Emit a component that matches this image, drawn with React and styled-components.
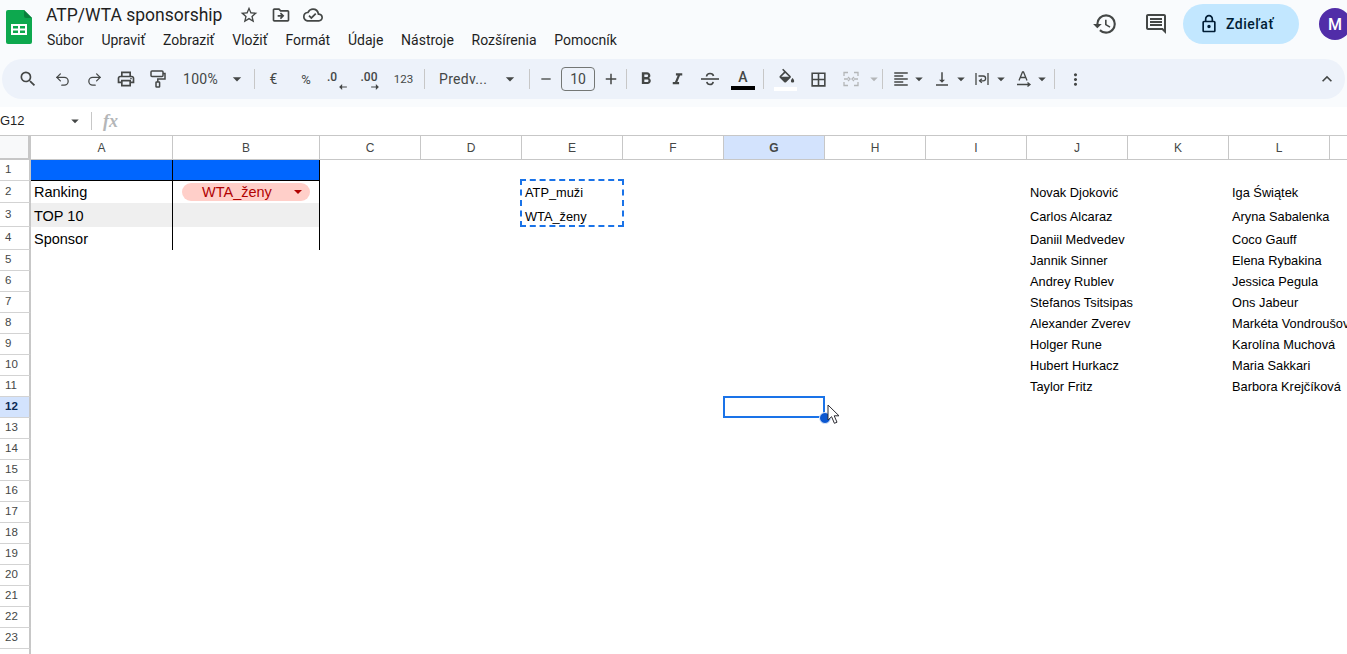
import React from "react";
import styled, { createGlobalStyle } from "styled-components";
import {
  MdSearch,
  MdOutlinePrint,
  MdStarBorder,
  MdOutlineDriveFileMove,
  MdOutlineCloudDone,
  MdHistory,
  MdOutlineComment,
  MdOutlineLock,
  MdArrowDropDown,
  MdRemove,
  MdAdd,
  MdFormatBold,
  MdFormatItalic,
  MdBorderAll,
  MdFormatAlignLeft,
  MdVerticalAlignBottom,
  MdMoreVert,
  MdExpandLess,
} from "react-icons/md";
import { Undo2, Redo2 } from "lucide-react";

const COLUMNS = ["A", "B", "C", "D", "E", "F", "G", "H", "I", "J", "K", "L", "M"];
const ROW_COUNT = 24;
const MENU = ["Súbor", "Upraviť", "Zobraziť", "Vložiť", "Formát", "Údaje", "Nástroje", "Rozšírenia", "Pomocník"];

const ATP = [
  "Novak Djoković",
  "Carlos Alcaraz",
  "Daniil Medvedev",
  "Jannik Sinner",
  "Andrey Rublev",
  "Stefanos Tsitsipas",
  "Alexander Zverev",
  "Holger Rune",
  "Hubert Hurkacz",
  "Taylor Fritz",
];
const WTA = [
  "Iga Świątek",
  "Aryna Sabalenka",
  "Coco Gauff",
  "Elena Rybakina",
  "Jessica Pegula",
  "Ons Jabeur",
  "Markéta Vondroušová",
  "Karolína Muchová",
  "Maria Sakkari",
  "Barbora Krejčíková",
];

function rowHeight(n) {
  return { 1: 21, 2: 22, 3: 24, 4: 23 }[n] || 21;
}

function SheetsLogo() {
  return (
    <svg width="26" height="34" viewBox="0 0 26 34">
      <path d="M2 0h16l8 8v24a2 2 0 0 1-2 2H2a2 2 0 0 1-2-2V2a2 2 0 0 1 2-2z" fill="#0da84e" />
      <path d="M18 0l8 8h-6a2 2 0 0 1-2-2z" fill="#0a7f3c" />
      <path d="M5 14h16v11H5z" fill="#fff" />
      <path d="M7 16h5v2.500H7zM14 16h5v2.500h-5zM7 20.500h5V23H7zM14 20.500h5V23h-5z" fill="#0da84e" />
    </svg>
  );
}

function PaintIcon() {
  return (
    <svg width="16" height="18" viewBox="0 0 16 18" fill="none" stroke="#444746" strokeWidth="1.5">
      <rect x="1" y="1" width="12" height="5.500" rx="1" />
      <path d="M13 3.500h2V9H7.800v3" />
      <rect x="6" y="12" width="3.600" height="5" rx="0.600" />
    </svg>
  );
}

function StrikeIcon() {
  return (
    <svg width="18" height="16" viewBox="0 0 18 16" fill="none" stroke="#444746" strokeWidth="1.6">
      <path d="M0 8h18" />
      <path d="M5.500 5.500C5.800 3.300 7.200 2.500 9 2.500s3.200.8 3.500 2.500" />
      <path d="M5.800 10.800c.4 1.800 1.600 2.700 3.200 2.700s2.900-.9 3.200-2.700" />
    </svg>
  );
}

function FillIcon() {
  return (
    <svg width="18" height="18" viewBox="0 0 22 18" fill="#444746">
      <path d="M16.560 8.940L7.620 0 6.210 1.410l2.380 2.380-5.150 5.150c-.59.590-.59 1.540 0 2.120l5.500 5.500c.29.290.68.440 1.060.440s.77-.15 1.060-.44l5.500-5.500c.59-.58.59-1.530 0-2.120zM5.210 10L10 5.210 14.790 10H5.210zM19 11.500s-2 2.170-2 3.500c0 1.100.9 2 2 2s2-.9 2-2c0-1.330-2-3.500-2-3.500z" />
    </svg>
  );
}

function WrapIcon() {
  return (
    <svg width="14" height="14" viewBox="0 0 14 14" fill="none" stroke="#444746" strokeWidth="1.3">
      <path d="M1 1v12M13 1v12" />
      <path d="M3.500 4h4.700a2.400 2.400 0 0 1 0 4.800H4.800" />
      <path d="M6.800 6.800L4.600 8.800l2.200 2" />
    </svg>
  );
}

function RotateIcon() {
  return (
    <svg width="18" height="18" viewBox="0 0 18 18" fill="none" stroke="#444746" strokeWidth="1.3">
      <path d="M4 10.500L7.500 2h1L12 10.500M5.200 7.500h5.600" />
      <path d="M2 14.500h12M12.500 12.500l2.500 2-2.500 2" />
    </svg>
  );
}

function MergeIcon() {
  return (
    <svg width="16" height="16" viewBox="0 0 16 16" fill="none" stroke="#b4b6b8" strokeWidth="1.3">
      <path d="M1 5V1.500h4M11 1.500h4V5M1 11v3.500h4M11 14.500h4V11" />
      <path d="M1 8h4M5 6l2 2-2 2M15 8h-4M11 6L9 8l2 2" />
    </svg>
  );
}

function SmallArrow({ flip }) {
  return (
    <svg width="8" height="6" viewBox="0 0 9 7" fill="#444746" style={{ transform: flip ? "scaleX(-1)" : "none" }}>
      <path d="M0 2.800h5.500V0L9 3.500 5.500 7V4.200H0z" />
    </svg>
  );
}

function ArrowCursor() {
  return (
    <svg width="13" height="21" viewBox="0 0 13 21">
      <path
        d="M1 1v15l3.600-3.300 2.800 6.600 2.600-1.100-2.800-6.400h4.800z"
        fill="#fff"
        stroke="#2b2b33"
        strokeWidth="1"
      />
    </svg>
  );
}

function Cell({ col, row }) {
  const isTable = (col === "A" || col === "B") && row <= 4;
  const names = { J: ATP, L: WTA }[col];
  let content = null;
  if (col === "A") content = { 2: "Ranking", 3: "TOP 10", 4: "Sponsor" }[row];
  if (names && row >= 2 && row <= 11) content = names[row - 2];
  if (col === "E") content = { 2: "ATP_muži", 3: "WTA_ženy" }[row];

  return (
    <SheetCell
      $fill={isTable && row === 1 ? "#0066ff" : isTable && row === 3 ? "#efefef" : "transparent"}
      $edge={isTable}
      $under={isTable && row === 1}
      $large={col === "A"}
    >
      {col === "B" && row === 2 && (
        <Chip>
          <ChipLabel>WTA_ženy</ChipLabel>
          <ChipCaret />
        </Chip>
      )}
      {content}
      {col === "E" && row === 2 && <CopyRange />}
      {col === "G" && row === 12 && (
        <Selection>
          <FillHandle />
          <CursorSpot>
            <ArrowCursor />
          </CursorSpot>
        </Selection>
      )}
    </SheetCell>
  );
}

export default function App() {
  const rows = Array.from({ length: ROW_COUNT }, (_, i) => i + 1);
  return (
    <Page>
      <GlobalStyle />
      <Header>
        <LogoSlot>
          <SheetsLogo />
        </LogoSlot>
        <TitleBlock>
          <TitleRow>
            <DocTitle>ATP/WTA sponsorship</DocTitle>
            <TitleIcons>
              <MdStarBorder size={20} />
              <MdOutlineDriveFileMove size={20} />
              <MdOutlineCloudDone size={20} />
            </TitleIcons>
          </TitleRow>
          <MenuBar>
            {MENU.map((item) => (
              <MenuItem key={item}>{item}</MenuItem>
            ))}
          </MenuBar>
        </TitleBlock>
        <HeaderActions>
          <RoundAction>
            <MdHistory size={26} />
          </RoundAction>
          <RoundAction>
            <MdOutlineComment size={24} />
          </RoundAction>
          <ShareButton>
            <MdOutlineLock size={20} />
            Zdieľať
          </ShareButton>
          <Avatar>M</Avatar>
        </HeaderActions>
      </Header>

      <Toolbar>
        <Tool $w={32} $ml={10}><MdSearch size={20} /></Tool>
        <Tool $w={32} $ml={2}><Undo2 size={17} strokeWidth={1.8} /></Tool>
        <Tool $w={32}><Redo2 size={17} strokeWidth={1.8} /></Tool>
        <Tool $w={32}><MdOutlinePrint size={20} /></Tool>
        <Tool $w={31}><PaintIcon /></Tool>
        <ZoomLabel>100%</ZoomLabel>
        <Caret $w={20}><MdArrowDropDown size={20} /></Caret>
        <Separator $ml={7} />
        <TextTool $w={37}>€</TextTool>
        <TextTool $w={28} $size={13}>%</TextTool>
        <DecimalTool $w={36} $shift={12}>
          .0
          <DecimalArrow $right={9}><SmallArrow flip /></DecimalArrow>
        </DecimalTool>
        <DecimalTool $w={30} $shift={4}>
          .00
          <DecimalArrow $right={7}><SmallArrow /></DecimalArrow>
        </DecimalTool>
        <TextTool $w={35} $size={11.5}>123</TextTool>
        <Separator $ml={3} />
        <FontLabel>Predv...</FontLabel>
        <Caret $w={20}><MdArrowDropDown size={20} /></Caret>
        <Separator $ml={9} />
        <Tool $w={31}><MdRemove size={16} /></Tool>
        <SizeBox>10</SizeBox>
        <Tool $w={31}><MdAdd size={18} /></Tool>
        <Separator />
        <Tool $w={38}><MdFormatBold size={20} /></Tool>
        <Tool $w={24}><MdFormatItalic size={19} /></Tool>
        <Tool $w={42}><StrikeIcon /></Tool>
        <ColorTool $w={24} $bar="#000000">A</ColorTool>
        <Separator $ml={8} />
        <FillTool>
          <FillIcon />
        </FillTool>
        <Tool $w={32} $ml={5}><MdBorderAll size={19} /></Tool>
        <Tool $w={34}><MergeIcon /></Tool>
        <Caret $w={11} $muted><MdArrowDropDown size={18} /></Caret>
        <Separator $ml={3} />
        <Tool $w={20} $ml={8}><MdFormatAlignLeft size={18} /></Tool>
        <Caret $w={16}><MdArrowDropDown size={18} /></Caret>
        <Tool $w={24} $ml={3}><MdVerticalAlignBottom size={18} /></Tool>
        <Caret $w={14}><MdArrowDropDown size={18} /></Caret>
        <Tool $w={22} $ml={3}><WrapIcon /></Tool>
        <Caret $w={16}><MdArrowDropDown size={18} /></Caret>
        <Tool $w={22} $ml={4}><RotateIcon /></Tool>
        <Caret $w={14}><MdArrowDropDown size={18} /></Caret>
        <Separator $ml={5} />
        <Tool $w={24} $ml={8}><MdMoreVert size={19} /></Tool>
        <ToolbarEnd>
          <MdExpandLess size={20} />
        </ToolbarEnd>
      </Toolbar>

      <FormulaBar>
        <NameBox>G12</NameBox>
        <MdArrowDropDown size={18} color="#444746" />
        <FormulaDivider />
        <FxMark>fx</FxMark>
      </FormulaBar>

      <SheetGrid>
        <Corner />
        {COLUMNS.map((col) => (
          <ColumnHead key={col} $active={col === "G"}>
            {col === "M" ? "" : col}
          </ColumnHead>
        ))}
        {rows.map((row) => (
          <React.Fragment key={row}>
            <RowHead $active={row === 12} style={{ height: rowHeight(row) }}>
              {row < ROW_COUNT ? row : ""}
            </RowHead>
            {COLUMNS.map((col) => (
              <Cell key={col} col={col} row={row} />
            ))}
          </React.Fragment>
        ))}
      </SheetGrid>
    </Page>
  );
}

const GlobalStyle = createGlobalStyle`
  html, body {
    margin: 0;
    height: 100%;
    overflow: hidden;
    background: #ffffff;
  }
  * {
    box-sizing: border-box;
  }
`;

const Page = styled.div`
  width: 1347px;
  height: 654px;
  overflow: hidden;
  font-family: Roboto, "Liberation Sans", sans-serif;
  color: #1f1f1f;
  background: #f9fbfd;
`;

const Header = styled.header`
  display: flex;
  height: 59px;
  padding: 10px 0 0 6px;
`;

const LogoSlot = styled.div`
  width: 40px;
  height: 34px;
  flex-shrink: 0;
`;

const TitleBlock = styled.div`
  display: flex;
  flex-direction: column;
  margin-top: -10px;
`;

const TitleRow = styled.div`
  display: flex;
  align-items: center;
  height: 30px;
`;

const DocTitle = styled.div`
  width: 185px;
  font-size: 17.5px;
  white-space: nowrap;
`;

const TitleIcons = styled.div`
  display: flex;
  gap: 12px;
  color: #444746;
  margin-left: 8px;
`;

const MenuBar = styled.nav`
  display: flex;
  height: 20px;
  align-items: center;
`;

const MenuItem = styled.span`
  font-size: 14px;
  margin: 0 16.750px 0 1px;
  white-space: nowrap;
`;

const HeaderActions = styled.div`
  display: flex;
  align-items: flex-start;
  margin-left: auto;
  margin-top: -6px;
  margin-right: -4px;
  flex-shrink: 0;
`;

const RoundAction = styled.div`
  width: 51px;
  height: 40px;
  display: flex;
  align-items: center;
  justify-content: center;
  color: #444746;
`;

const ShareButton = styled.div`
  width: 116px;
  height: 40px;
  margin-left: 2px;
  padding-left: 16px;
  border-radius: 20px;
  background: #c2e7ff;
  color: #001d35;
  font-size: 14px;
  font-weight: 500;
  letter-spacing: 0.5px;
  display: flex;
  align-items: center;
  gap: 7px;
`;

const Avatar = styled.div`
  width: 32px;
  height: 32px;
  margin: 4px 0 0 20px;
  border-radius: 50%;
  background: #512da8;
  color: #fff;
  font-size: 16px;
  font-weight: 500;
  display: flex;
  align-items: center;
  justify-content: center;
`;

const Toolbar = styled.div`
  display: flex;
  align-items: center;
  height: 40px;
  margin: 0 2px 8px;
  border-radius: 20px;
  background: #edf2fa;
  color: #444746;
`;

const Tool = styled.div`
  width: ${(p) => p.$w}px;
  margin-left: ${(p) => p.$ml || 0}px;
  height: 24px;
  flex-shrink: 0;
  display: flex;
  align-items: center;
  justify-content: center;
`;

const TextTool = styled(Tool)`
  font-size: ${(p) => p.$size || 14}px;
`;

const DecimalTool = styled(Tool)`
  position: relative;
  font-size: 12px;
  font-weight: 500;
  padding: 0 ${(p) => p.$shift}px 5px 0;
`;

const DecimalArrow = styled.span`
  position: absolute;
  right: ${(p) => p.$right}px;
  bottom: 1px;
  line-height: 0;
`;

const ColorTool = styled(Tool)`
  height: 22px;
  border-bottom: 4px solid ${(p) => p.$bar};
  font-size: 14px;
  font-weight: 500;
`;

const FillTool = styled.div`
  width: 23px;
  height: 24px;
  margin-left: 10px;
  flex-shrink: 0;
  display: flex;
  justify-content: center;
  border-bottom: 4px solid #ffffff;
`;

const ZoomLabel = styled.div`
  width: 44px;
  margin-left: 10px;
  font-size: 14px;
  letter-spacing: 0.3px;
`;

const FontLabel = styled.div`
  width: 61px;
  margin-left: 14px;
  font-size: 14px;
  letter-spacing: 0.3px;
`;

const Caret = styled.div`
  width: ${(p) => p.$w}px;
  flex-shrink: 0;
  display: flex;
  justify-content: center;
  color: ${(p) => (p.$muted ? "#b4b6b8" : "#444746")};
  svg {
    flex-shrink: 0;
  }
`;

const Separator = styled.div`
  width: 1px;
  height: 20px;
  margin-left: ${(p) => p.$ml || 0}px;
  flex-shrink: 0;
  background: #c7c7c7;
`;

const SizeBox = styled.div`
  width: 34px;
  height: 24px;
  flex-shrink: 0;
  border: 1px solid #747775;
  border-radius: 4px;
  font-size: 14px;
  display: flex;
  align-items: center;
  justify-content: center;
`;

const ToolbarEnd = styled.div`
  margin-left: auto;
  margin-right: 8px;
  display: flex;
`;

const FormulaBar = styled.div`
  display: flex;
  align-items: center;
  height: 28px;
  background: #ffffff;
`;

const NameBox = styled.div`
  width: 66px;
  padding-bottom: 2px;
  font-family: "Liberation Sans", Arial, sans-serif;
  font-size: 13px;
  color: #1f1f1f;
`;

const FormulaDivider = styled.div`
  width: 1px;
  height: 18px;
  margin-left: 7px;
  background: #c7c7c7;
`;

const FxMark = styled.div`
  margin-left: 11px;
  font-family: "Liberation Serif", serif;
  font-style: italic;
  font-weight: 700;
  font-size: 18px;
  color: #b4b6b8;
`;

const SheetGrid = styled.div`
  display: grid;
  grid-template-columns: 31px 142px 147px repeat(11, 101px);
  grid-auto-rows: min-content;
  height: 519px;
  overflow: hidden;
  background: #ffffff;
  font-family: "Liberation Sans", Arial, sans-serif;
`;

const Corner = styled.div`
  height: 25px;
  background: #f8f9fa;
  border-top: 1px solid #c7c7c7;
  border-right: 3px solid #c7c7c7;
  border-bottom: 2px solid #c7c7c7;
`;

const ColumnHead = styled.div`
  height: 25px;
  border-top: 1px solid #c7c7c7;
  border-right: 1px solid #c7c7c7;
  border-bottom: 1px solid #c7c7c7;
  background: ${(p) => (p.$active ? "#d3e3fd" : "#ffffff")};
  color: #444746;
  font-size: 12px;
  font-weight: ${(p) => (p.$active ? 700 : 400)};
  display: flex;
  align-items: center;
  justify-content: center;
`;

const RowHead = styled.div`
  padding: 0 0 2px 5px;
  border-right: 2px solid #c7c7c7;
  border-bottom: 1px solid #d3d3d3;
  background: ${(p) => (p.$active ? "#d3e3fd" : "#ffffff")};
  color: ${(p) => (p.$active ? "#0b2a55" : "#444746")};
  font-size: 11.5px;
  font-weight: ${(p) => (p.$active ? 700 : 400)};
  display: flex;
  align-items: center;
`;

const SheetCell = styled.div`
  position: relative;
  padding: 0 0 3px 3px;
  background: ${(p) => p.$fill};
  border-right: ${(p) => (p.$edge ? "1px solid #000000" : "0")};
  border-bottom: ${(p) => (p.$under ? "1px solid #000000" : "0")};
  color: #000000;
  font-size: ${(p) => (p.$large ? 14.5 : 12.8)}px;
  line-height: 15px;
  white-space: nowrap;
  display: flex;
  align-items: flex-end;
`;

const Chip = styled.div`
  width: 128px;
  height: 18px;
  margin: 0 0 -1px 6px;
  border-radius: 9px;
  background: #ffcfc9;
  color: #b10202;
  font-size: 14.5px;
  padding-left: 20px;
  display: flex;
  align-items: center;
  position: relative;
`;

const ChipLabel = styled.span`
  margin-right: 1px;
`;

const ChipCaret = styled.span`
  position: absolute;
  right: 8px;
  top: 7px;
  border-left: 4px solid transparent;
  border-right: 4px solid transparent;
  border-top: 4px solid #b10202;
`;

const CopyRange = styled.div`
  position: absolute;
  left: -2px;
  top: -2px;
  width: 104px;
  height: 48px;
  border: 2px dashed #1a73e8;
  pointer-events: none;
`;

const Selection = styled.div`
  position: absolute;
  left: -1px;
  top: -1px;
  width: 102px;
  height: 22px;
  border: 2px solid #1a73e8;
`;

const FillHandle = styled.div`
  position: absolute;
  right: -8px;
  bottom: -8px;
  width: 12px;
  height: 12px;
  border-radius: 50%;
  background: #0b57d0;
  border: 1px solid #dbe7fb;
`;

const CursorSpot = styled.div`
  position: absolute;
  left: 102px;
  top: 6px;
  line-height: 0;
`;
